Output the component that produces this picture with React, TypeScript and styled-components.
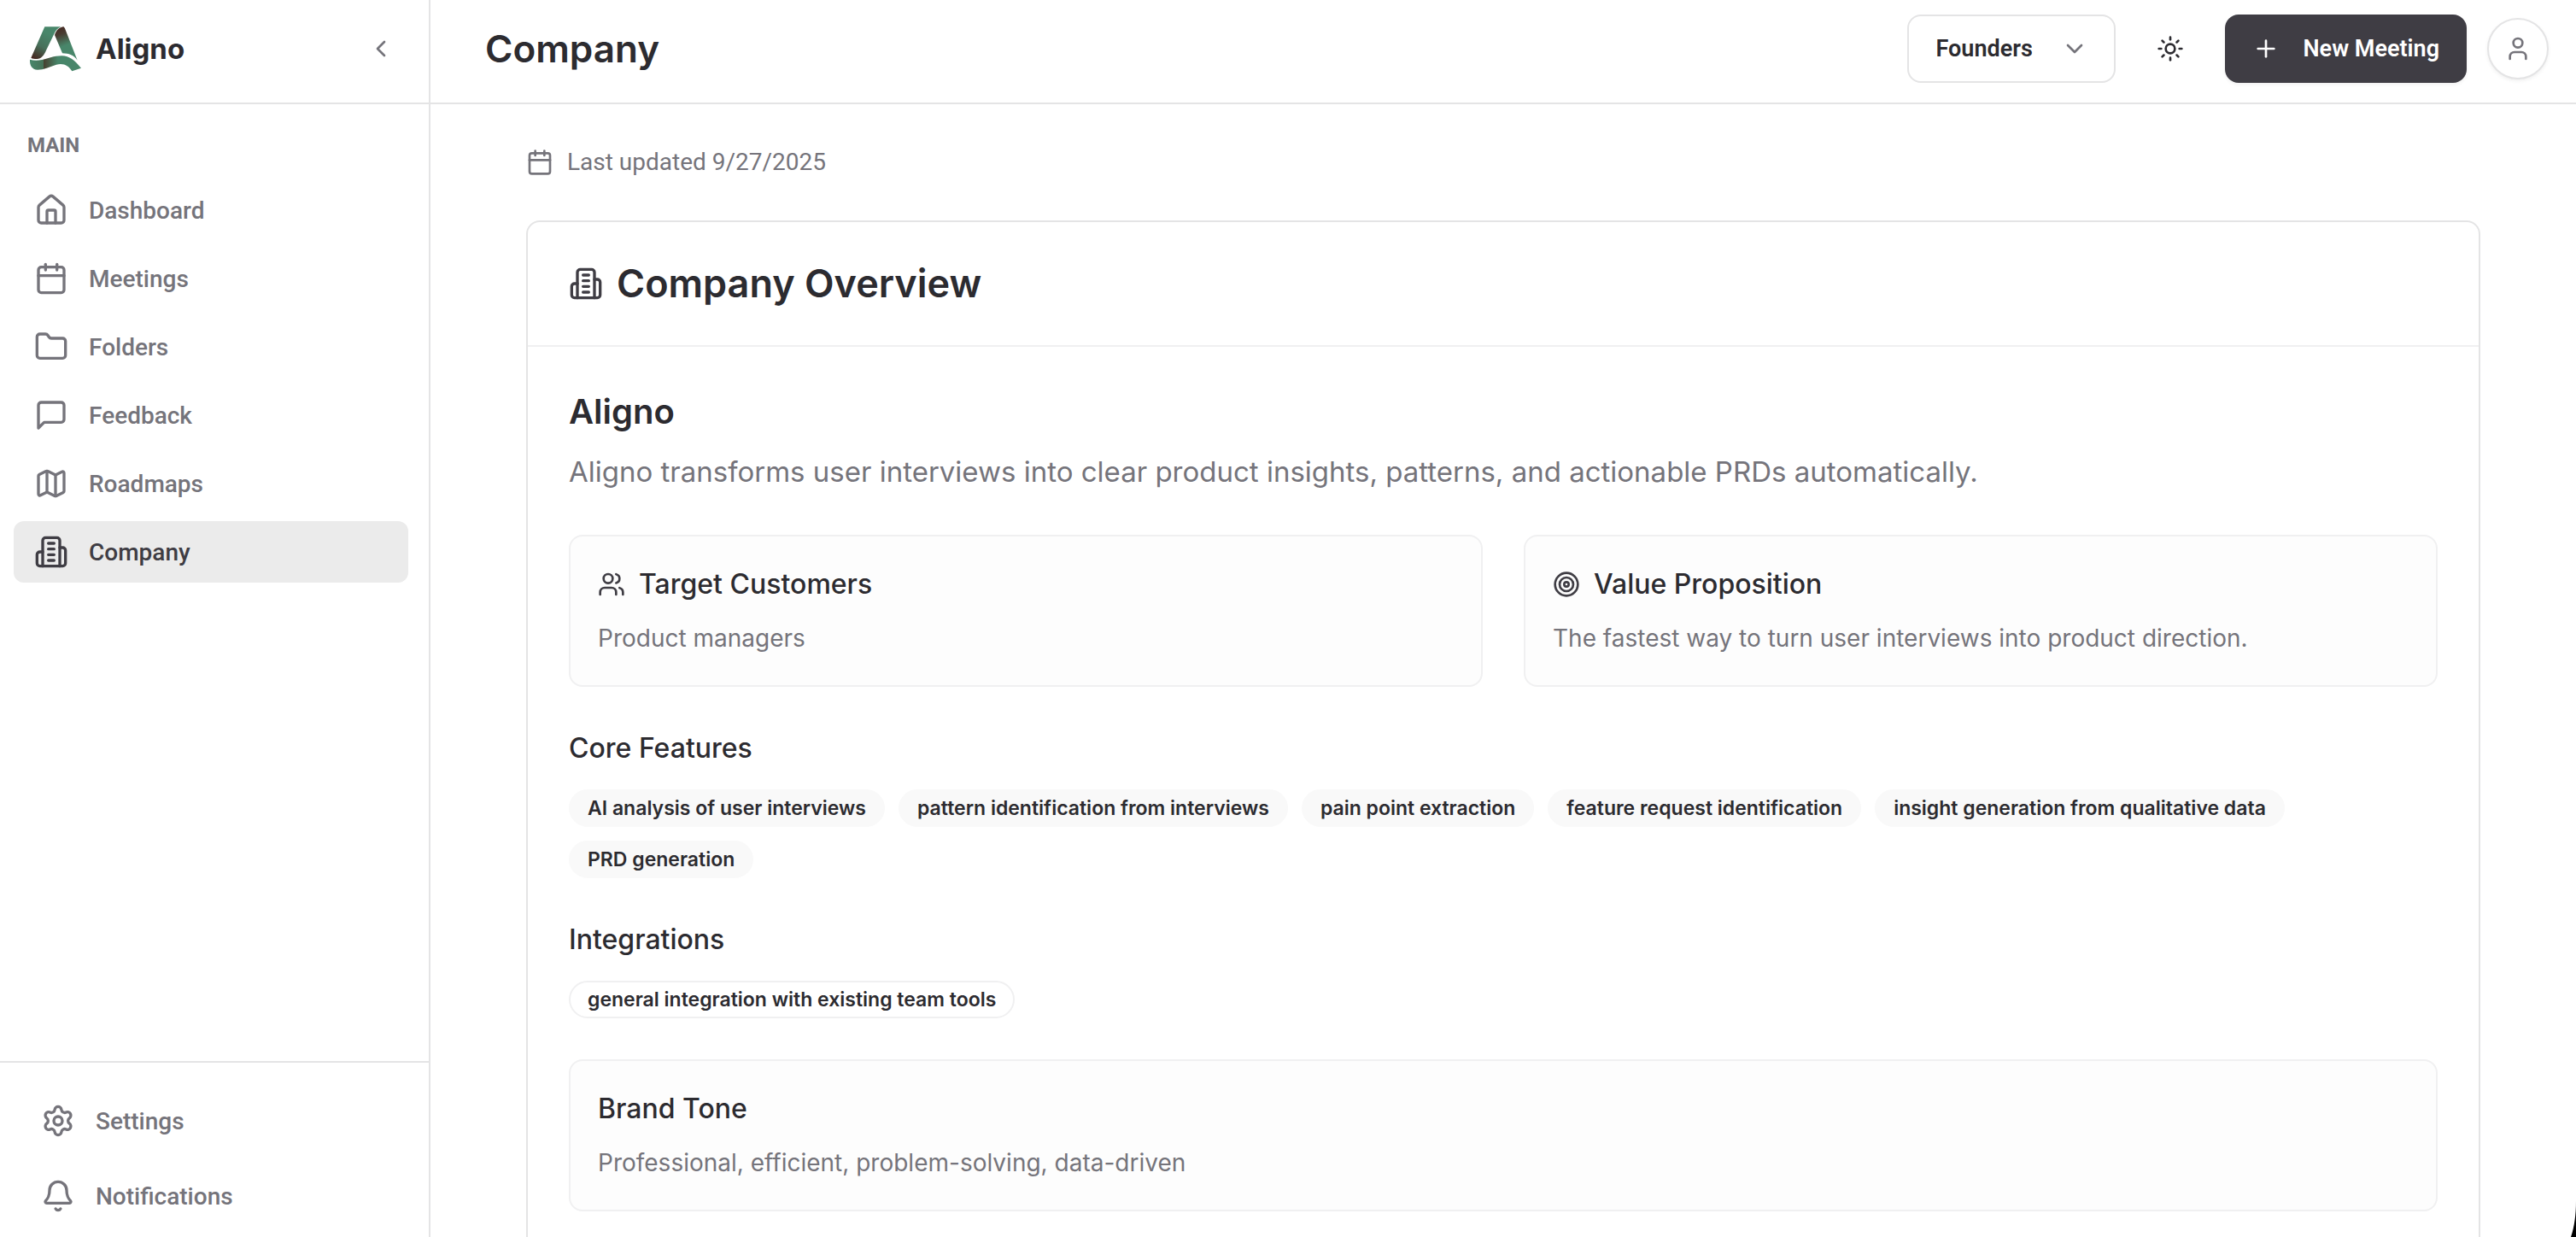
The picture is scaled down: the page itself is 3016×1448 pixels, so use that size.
import React from 'react';
import styled, { createGlobalStyle, css } from 'styled-components';
import {
  Bell,
  Calendar,
  ChevronDown,
  ChevronLeft,
  Folder,
  House,
  Map as MapIcon,
  Plus,
  Settings,
  Sun,
  User,
  Users,
} from 'lucide-react';

const color = {
  ink: '#2c2b30',
  strong: '#3f3d44',
  muted: '#75747b',
  line: '#e4e4e5',
  softLine: '#f0f0f1',
  panel: '#fdfdfd',
  pill: '#f9f9f9',
  active: '#ebebeb',
};

const display = '"Inter", "Liberation Sans", sans-serif';
const ui = '"Roboto", "Liberation Sans", sans-serif';

const GlobalStyle = createGlobalStyle`
  *, *::before, *::after { box-sizing: border-box; }
  body {
    margin: 0;
    background: #fff;
    color: ${color.ink};
    font-family: ${display};
    font-size: 28px;
    -webkit-font-smoothing: antialiased;
  }
  h1, h2, h3, h4, p, ul { margin: 0; padding: 0; }
  ul { list-style: none; }
  svg { display: block; flex-shrink: 0; }
  button, select { font: inherit; color: inherit; cursor: pointer; }
`;

const Shell = styled.div`
  display: grid;
  grid-template-columns: 504px minmax(0, 1fr);
  height: 100vh;
  overflow: hidden;
`;

const Sidebar = styled.aside`
  display: flex;
  flex-direction: column;
  min-height: 0;
  border-right: 2px solid ${color.line};
  font-family: ${ui};
`;

const barBase = css`
  display: flex;
  align-items: center;
  justify-content: space-between;
  flex-shrink: 0;
  height: 122px;
  padding-bottom: 6px;
  border-bottom: 2px solid ${color.line};
`;

const BrandBar = styled.div`
  ${barBase}
  padding-left: 34px;
  padding-right: 40px;
`;

const Brand = styled.a`
  display: flex;
  align-items: center;
  gap: 16px;
  color: ${color.ink};
  font-family: ${display};
  font-size: 33px;
  font-weight: 700;
  text-decoration: none;
`;

const IconButton = styled.button<{ $size: number }>`
  display: grid;
  place-items: center;
  width: ${(p) => p.$size}px;
  height: ${(p) => p.$size}px;
  padding: 0;
  border: 0;
  border-radius: 16px;
  background: transparent;
`;

const CollapseButton = styled(IconButton)`
  color: ${color.muted};
`;

const Nav = styled.nav`
  flex: 1;
  min-height: 0;
  padding: 32px 24px 0 16px;
`;

const NavHeading = styled.h2`
  padding: 0 16px;
  color: ${color.muted};
  font-size: 24px;
  font-weight: 700;
  line-height: 32px;
`;

const NavList = styled.ul<{ $gap: number }>`
  display: grid;
  gap: ${(p) => p.$gap}px;
`;

const MainNavList = styled(NavList)`
  margin-top: 24px;
`;

const NavLink = styled.a<{ $active?: boolean }>`
  display: flex;
  align-items: center;
  gap: 24px;
  height: 72px;
  padding: 0 24px;
  border-radius: 12px;
  background: ${(p) => (p.$active ? color.active : 'transparent')};
  color: ${(p) => (p.$active ? color.strong : color.muted)};
  font-size: 28px;
  font-weight: 500;
  text-decoration: none;
`;

const SidebarFooter = styled.div`
  flex-shrink: 0;
  padding: 32px 24px 12px;
  border-top: 2px solid ${color.line};
`;

const Page = styled.div`
  display: flex;
  flex-direction: column;
  min-width: 0;
  min-height: 0;
`;

const TopBar = styled.header`
  ${barBase}
  padding-left: 64px;
  padding-right: 32px;
`;

const PageTitle = styled.h1`
  font-size: 44px;
  font-weight: 600;
  line-height: 56px;
`;

const Actions = styled.div`
  display: flex;
  align-items: center;
  gap: 24px;
  font-family: ${ui};
`;

const TeamPicker = styled.label`
  position: relative;
  display: block;
  color: ${color.muted};

  svg {
    position: absolute;
    top: 24px;
    right: 32px;
    pointer-events: none;
  }
`;

const TeamSelect = styled.select`
  appearance: none;
  width: 244px;
  height: 80px;
  padding: 0 72px 0 32px;
  border: 2px solid ${color.line};
  border-radius: 16px;
  background: #fff;
  color: ${color.ink};
  font-size: 27px;
  font-weight: 600;
`;

const PrimaryButton = styled.button`
  display: flex;
  align-items: center;
  gap: 28px;
  height: 80px;
  padding: 0 32px;
  border: 0;
  border-radius: 16px;
  background: ${color.strong};
  color: #fff;
  font-size: 27px;
  font-weight: 600;
  white-space: nowrap;
  box-shadow: 0 2px 4px rgba(0, 0, 0, 0.06);
`;

const AvatarButton = styled(IconButton)`
  border: 2px solid ${color.line};
  border-radius: 50%;
  background: #fff;
  color: ${color.muted};
  box-shadow: 0 2px 4px rgba(0, 0, 0, 0.06);
`;

const Content = styled.main`
  flex: 1;
  min-height: 0;
  padding: 48px 112px;
  overflow-y: auto;
  scrollbar-width: none;
`;

const Updated = styled.p`
  display: flex;
  align-items: center;
  gap: 16px;
  color: ${color.muted};
  font-family: ${ui};
  font-size: 28px;
  line-height: 40px;
`;

const Card = styled.section`
  margin-top: 48px;
  border: 2px solid ${color.line};
  border-radius: 16px;
`;

const CardHeader = styled.header`
  display: flex;
  align-items: center;
  gap: 16px;
  padding: 44px 48px;
  border-bottom: 2px solid ${color.softLine};
  color: ${color.strong};
`;

const CardTitle = styled.h2`
  color: ${color.ink};
  font-size: 45px;
  font-weight: 600;
  line-height: 56px;
`;

const CardBody = styled.div`
  display: grid;
  gap: 48px;
  padding: 48px;
`;

const Intro = styled.div`
  display: grid;
  gap: 16px;
`;

const CompanyName = styled.h3`
  font-size: 40px;
  font-weight: 600;
  line-height: 56px;
`;

const Lead = styled.p`
  color: ${color.muted};
  font-size: 33px;
  line-height: 52px;
`;

const Columns = styled.div`
  display: grid;
  grid-template-columns: repeat(2, minmax(0, 1fr));
  gap: 48px;
`;

const Panel = styled.section`
  display: grid;
  gap: 16px;
  padding: 32px;
  border: 2px solid ${color.softLine};
  border-radius: 16px;
  background: ${color.panel};
`;

const PanelHeading = styled.div`
  display: flex;
  align-items: center;
  gap: 16px;
  color: ${color.strong};
`;

const SectionTitle = styled.h4`
  color: ${color.ink};
  font-size: 32px;
  font-weight: 500;
  line-height: 48px;
`;

const PanelText = styled.p`
  color: ${color.muted};
  font-size: 28px;
  line-height: 46px;
`;

const Group = styled.section`
  display: grid;
  gap: 24px;
`;

const Pills = styled.ul`
  display: flex;
  flex-wrap: wrap;
  gap: 16px;
`;

const Pill = styled.li<{ $outline?: boolean }>`
  padding: 4px 20px;
  border: 2px solid ${(p) => (p.$outline ? color.softLine : color.pill)};
  border-radius: 22px;
  background: ${(p) => (p.$outline ? '#fff' : color.pill)};
  font-size: 23px;
  font-weight: 600;
  line-height: 32px;
  white-space: nowrap;
`;

const WindowCorner = styled.svg`
  position: fixed;
  right: 0;
  bottom: 0;
  pointer-events: none;
`;

type GlyphProps = { size: number };

function Glyph({ size, children }: GlyphProps & { children: React.ReactNode }) {
  return (
    <svg
      width={size}
      height={size}
      viewBox="0 0 24 24"
      fill="none"
      stroke="currentColor"
      strokeWidth="2"
      strokeLinecap="round"
      strokeLinejoin="round"
      aria-hidden="true"
    >
      {children}
    </svg>
  );
}

function BuildingIcon({ size }: GlyphProps) {
  return (
    <Glyph size={size}>
      <path d="M6 22V4a2 2 0 0 1 2-2h8a2 2 0 0 1 2 2v18Z" />
      <path d="M6 12H4a2 2 0 0 0-2 2v6a2 2 0 0 0 2 2h2" />
      <path d="M18 9h2a2 2 0 0 1 2 2v9a2 2 0 0 1-2 2h-2" />
      <path d="M10 6h4M10 10h4M10 14h4M10 18h4" />
    </Glyph>
  );
}

function MessageIcon({ size }: GlyphProps) {
  return (
    <Glyph size={size}>
      <path d="M21 15a2 2 0 0 1-2 2H7l-4 4V5a2 2 0 0 1 2-2h14a2 2 0 0 1 2 2z" />
    </Glyph>
  );
}

function TargetIcon({ size }: GlyphProps) {
  return (
    <Glyph size={size}>
      <circle cx="12" cy="12" r="10" />
      <circle cx="12" cy="12" r="6" />
      <circle cx="12" cy="12" r="2" />
    </Glyph>
  );
}

function Logo() {
  return (
    <svg width="62" height="54" viewBox="30 29 186 162" aria-hidden="true">
      <defs>
        <linearGradient id="leg-left" gradientUnits="userSpaceOnUse" x1="100" y1="60" x2="50" y2="146">
          <stop offset="0" stopColor="#48866a" />
          <stop offset="0.5" stopColor="#47705a" />
          <stop offset="1" stopColor="#44261f" />
        </linearGradient>
        <linearGradient id="leg-right" gradientUnits="userSpaceOnUse" x1="138" y1="36" x2="165" y2="108">
          <stop offset="0" stopColor="#472c25" />
          <stop offset="0.3" stopColor="#483c31" />
          <stop offset="0.85" stopColor="#48866a" />
        </linearGradient>
        <linearGradient id="base" gradientUnits="userSpaceOnUse" x1="33" y1="0" x2="212" y2="0">
          <stop offset="0" stopColor="#48866a" />
          <stop offset="0.27" stopColor="#467257" />
          <stop offset="0.27" stopColor="#47402f" />
          <stop offset="0.55" stopColor="#48866a" />
        </linearGradient>
      </defs>
      <path fill="url(#leg-left)" d="M85 33H142C130 38 124 46 118 58L90 116C82 134 74 145 58 146C48 146 42 145 37 142Z" />
      <path fill="url(#leg-right)" d="M120 62C125 46 136 34 152 33L156 39L200 151C188 132 170 127 147 126Z" />
      <path
        fill="url(#base)"
        d="M33 148C46 152 60 152 76 149C100 144 115 135 145 135C172 135 190 151 213 178L181 189C168 169 152 160 126 166C102 173 82 184 60 184C40 183 32 168 33 148Z"
      />
    </svg>
  );
}

const mainLinks = [
  { label: 'Dashboard', icon: <House size={40} /> },
  { label: 'Meetings', icon: <Calendar size={40} /> },
  { label: 'Folders', icon: <Folder size={40} /> },
  { label: 'Feedback', icon: <MessageIcon size={40} /> },
  { label: 'Roadmaps', icon: <MapIcon size={40} /> },
  { label: 'Company', icon: <BuildingIcon size={40} />, active: true },
];

const footerLinks = [
  { label: 'Settings', icon: <Settings size={40} /> },
  { label: 'Notifications', icon: <Bell size={40} /> },
];

const features = [
  'AI analysis of user interviews',
  'pattern identification from interviews',
  'pain point extraction',
  'feature request identification',
  'insight generation from qualitative data',
  'PRD generation',
];

const integrations = ['general integration with existing team tools'];

export default function App() {
  return (
    <>
      <GlobalStyle />
      <Shell>
        <Sidebar>
          <BrandBar>
            <Brand href="#">
              <Logo />
              Aligno
            </Brand>
            <CollapseButton $size={32} type="button" aria-label="Collapse sidebar">
              <ChevronLeft size={32} />
            </CollapseButton>
          </BrandBar>
          <Nav>
            <NavHeading>MAIN</NavHeading>
            <MainNavList $gap={8}>
              {mainLinks.map((link) => (
                <li key={link.label}>
                  <NavLink href="#" $active={link.active} aria-current={link.active ? 'page' : undefined}>
                    {link.icon}
                    {link.label}
                  </NavLink>
                </li>
              ))}
            </MainNavList>
          </Nav>
          <SidebarFooter>
            <NavList $gap={16}>
              {footerLinks.map((link) => (
                <li key={link.label}>
                  <NavLink href="#">
                    {link.icon}
                    {link.label}
                  </NavLink>
                </li>
              ))}
            </NavList>
          </SidebarFooter>
        </Sidebar>

        <Page>
          <TopBar>
            <PageTitle>Company</PageTitle>
            <Actions>
              <TeamPicker>
                <TeamSelect aria-label="Team" defaultValue="Founders">
                  <option>Founders</option>
                </TeamSelect>
                <ChevronDown size={32} />
              </TeamPicker>
              <IconButton $size={80} type="button" aria-label="Toggle theme">
                <Sun size={32} />
              </IconButton>
              <PrimaryButton type="button">
                <Plus size={32} />
                New Meeting
              </PrimaryButton>
              <AvatarButton $size={72} type="button" aria-label="Account">
                <User size={32} />
              </AvatarButton>
            </Actions>
          </TopBar>

          <Content>
            <Updated>
              <Calendar size={32} />
              Last updated 9/27/2025
            </Updated>
            <Card>
              <CardHeader>
                <BuildingIcon size={40} />
                <CardTitle>Company Overview</CardTitle>
              </CardHeader>
              <CardBody>
                <Intro>
                  <CompanyName>Aligno</CompanyName>
                  <Lead>
                    Aligno transforms user interviews into clear product insights, patterns, and actionable PRDs
                    automatically.
                  </Lead>
                </Intro>
                <Columns>
                  <Panel>
                    <PanelHeading>
                      <Users size={32} />
                      <SectionTitle>Target Customers</SectionTitle>
                    </PanelHeading>
                    <PanelText>Product managers</PanelText>
                  </Panel>
                  <Panel>
                    <PanelHeading>
                      <TargetIcon size={32} />
                      <SectionTitle>Value Proposition</SectionTitle>
                    </PanelHeading>
                    <PanelText>The fastest way to turn user interviews into product direction.</PanelText>
                  </Panel>
                </Columns>
                <Group>
                  <SectionTitle>Core Features</SectionTitle>
                  <Pills>
                    {features.map((name) => (
                      <Pill key={name}>{name}</Pill>
                    ))}
                  </Pills>
                </Group>
                <Group>
                  <SectionTitle>Integrations</SectionTitle>
                  <Pills>
                    {integrations.map((name) => (
                      <Pill key={name} $outline>
                        {name}
                      </Pill>
                    ))}
                  </Pills>
                </Group>
                <Panel>
                  <SectionTitle>Brand Tone</SectionTitle>
                  <PanelText>Professional, efficient, problem-solving, data-driven</PanelText>
                </Panel>
              </CardBody>
            </Card>
          </Content>
        </Page>
      </Shell>
      <WindowCorner width="6" height="42" viewBox="0 0 6 42" aria-hidden="true">
        <path d="M6 0C6 16 4 30 0 42H6Z" fill="#000" />
      </WindowCorner>
    </>
  );
}
